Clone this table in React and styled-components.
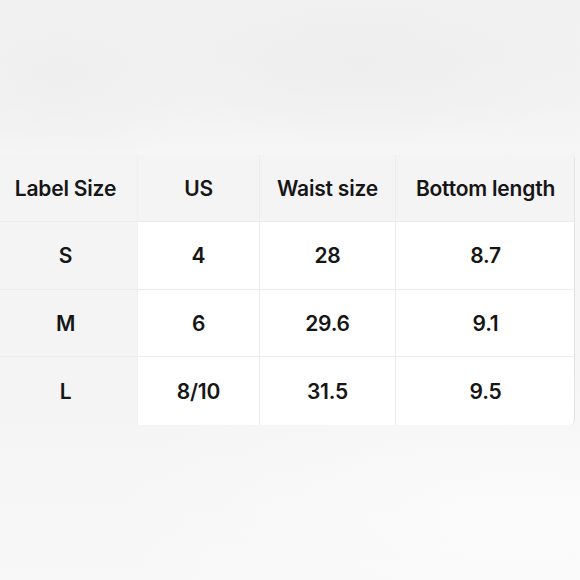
import React from "react";
import styled, { createGlobalStyle } from "styled-components";

const Global = createGlobalStyle`
  html, body { margin: 0; padding: 0; }
  body {
    width: 580px;
    height: 580px;
    overflow: hidden;
    font-family: Inter, "Noto Sans", "Liberation Sans", sans-serif;
  }
`;

const Page = styled.div`
  width: 580px;
  height: 580px;
  box-sizing: border-box;
  padding-top: 155px;
  background:
    radial-gradient(ellipse 160px 90px at 60px 75px, #efefef 0%, rgba(239,239,239,0) 100%),
    radial-gradient(ellipse 260px 80px at 360px 62px, #eeeeee 0%, rgba(238,238,238,0) 100%),
    radial-gradient(ellipse 420px 160px at 520px 520px, #fbfbfb 0%, rgba(251,251,251,0) 100%),
    linear-gradient(to bottom, #f1f1f1 0%, #f3f3f3 18%, #f6f6f6 27%, #f5f5f5 75%, #f8f8f8 100%);
`;

const Table = styled.div`
  width: 575px;
  display: grid;
  grid-template-columns: 138px 122px 136px 179px;
  grid-template-rows: 67px 68px 67px 68px;
  border-right: 1px solid #e3e3e3;
  border-top-right-radius: 4px;
  border-bottom-right-radius: 6px;
  overflow: hidden;
  box-sizing: border-box;
`;

const Cell = styled.div`
  display: flex;
  align-items: center;
  justify-content: center;
  padding-right: ${(p) => (p.$first ? "6px" : "0")};
  font-size: 21px;
  font-weight: 600;
  color: #161616;
  letter-spacing: -0.2px;
  background: ${(p) => (p.$head || p.$first ? "#f4f4f4" : "#ffffff")};
  border-right: ${(p) => (p.$last ? "none" : "1px solid #ececec")};
  border-bottom: ${(p) => (p.$bottom ? "none" : "1px solid #ececec")};
  box-sizing: border-box;
  ${(p) => (p.$first ? "border-right-color: #f0f0f0;" : "")}
`;

const header = ["Label Size", "US", "Waist size", "Bottom length"];
const rows = [
  ["S", "4", "28", "8.7"],
  ["M", "6", "29.6", "9.1"],
  ["L", "8/10", "31.5", "9.5"],
];

export default function App() {
  return (
    <>
      <Global />
      <Page>
        <Table>
          {header.map((h, i) => (
            <Cell key={h} $head $first={i === 0} $last={i === 3}>
              {h}
            </Cell>
          ))}
          {rows.map((r, ri) =>
            r.map((c, ci) => (
              <Cell
                key={ri + "-" + ci}
                $first={ci === 0}
                $last={ci === 3}
                $bottom={ri === rows.length - 1}
              >
                {c}
              </Cell>
            ))
          )}
        </Table>
      </Page>
    </>
  );
}
